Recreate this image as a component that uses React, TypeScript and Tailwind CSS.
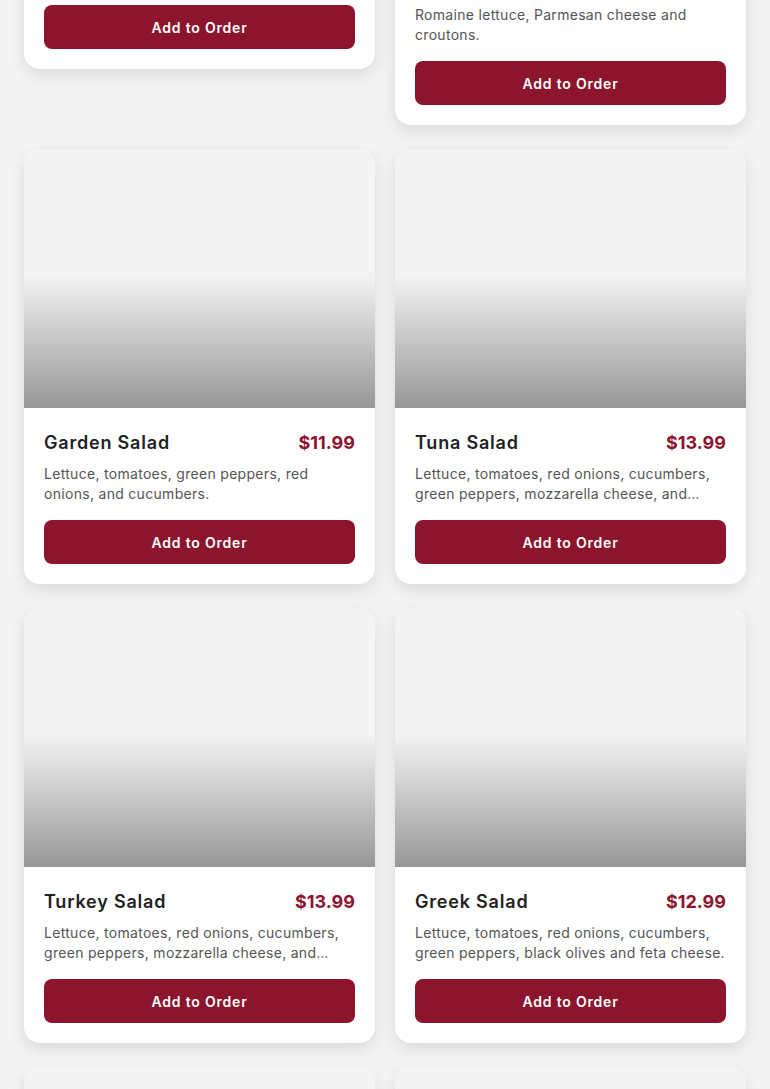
import React from "react";

type Item = { name: string; price: string; desc?: string; imgH?: string };

const rows: Item[][] = [
  [
    { name: "Chef Salad", price: "$13.99", imgH: "h-[251px]" },
    { name: "Caesar Salad", price: "$10.99", desc: "Romaine lettuce, Parmesan cheese and croutons." },
  ],
  [
    { name: "Garden Salad", price: "$11.99", desc: "Lettuce, tomatoes, green peppers, red onions, and cucumbers." },
    { name: "Tuna Salad", price: "$13.99", desc: "Lettuce, tomatoes, red onions, cucumbers, green peppers, mozzarella cheese, and tuna." },
  ],
  [
    { name: "Turkey Salad", price: "$13.99", desc: "Lettuce, tomatoes, red onions, cucumbers, green peppers, mozzarella cheese, and turkey." },
    { name: "Greek Salad", price: "$12.99", desc: "Lettuce, tomatoes, red onions, cucumbers, green peppers, black olives and feta cheese." },
  ],
  [
    { name: "Antipasto Salad", price: "$14.99", desc: "Lettuce, tomatoes, ham, salami, provolone cheese and olives." },
    { name: "Chicken Salad", price: "$13.99", desc: "Lettuce, tomatoes, red onions, cucumbers and grilled chicken." },
  ],
];

function Card({ item }: { item: Item }) {
  return (
    <div className="bg-white rounded-2xl overflow-hidden shadow-[0_6px_16px_rgba(0,0,0,0.10)]">
      <div className={`${item.imgH ?? "h-[259px]"} bg-[#f3f3f3] bg-linear-to-t from-[rgba(0,0,0,0.38)] to-transparent to-51%`} />
      <div className="p-5">
        <div className="flex items-center justify-between h-7">
          <span className="text-[18px] font-semibold tracking-[0.8px] text-[#222222]">{item.name}</span>
          <span className="text-[18px] font-bold text-[#8c1430]">{item.price}</span>
        </div>
        {item.desc && (
          <p className="mt-2 text-[14px] leading-5 tracking-[0.3px] text-[#555555] line-clamp-2">{item.desc}</p>
        )}
        <button className="mt-4 w-full h-11 rounded-lg bg-[#8c142d] text-white text-[14px] font-semibold tracking-[0.8px]">
          Add to Order
        </button>
      </div>
    </div>
  );
}

export default function App() {
  return (
    <div className="h-[1089px] overflow-hidden bg-[#f3f3f3]" style={{ fontFamily: "Inter, 'Noto Sans', sans-serif" }}>
      <div className="px-6 -mt-[310px] flex flex-col gap-6">
        {rows.map((r, i) => (
          <div key={i} className="grid grid-cols-2 gap-5 items-start">
            {r.map((it) => (
              <Card key={it.name} item={it} />
            ))}
          </div>
        ))}
      </div>
    </div>
  );
}
